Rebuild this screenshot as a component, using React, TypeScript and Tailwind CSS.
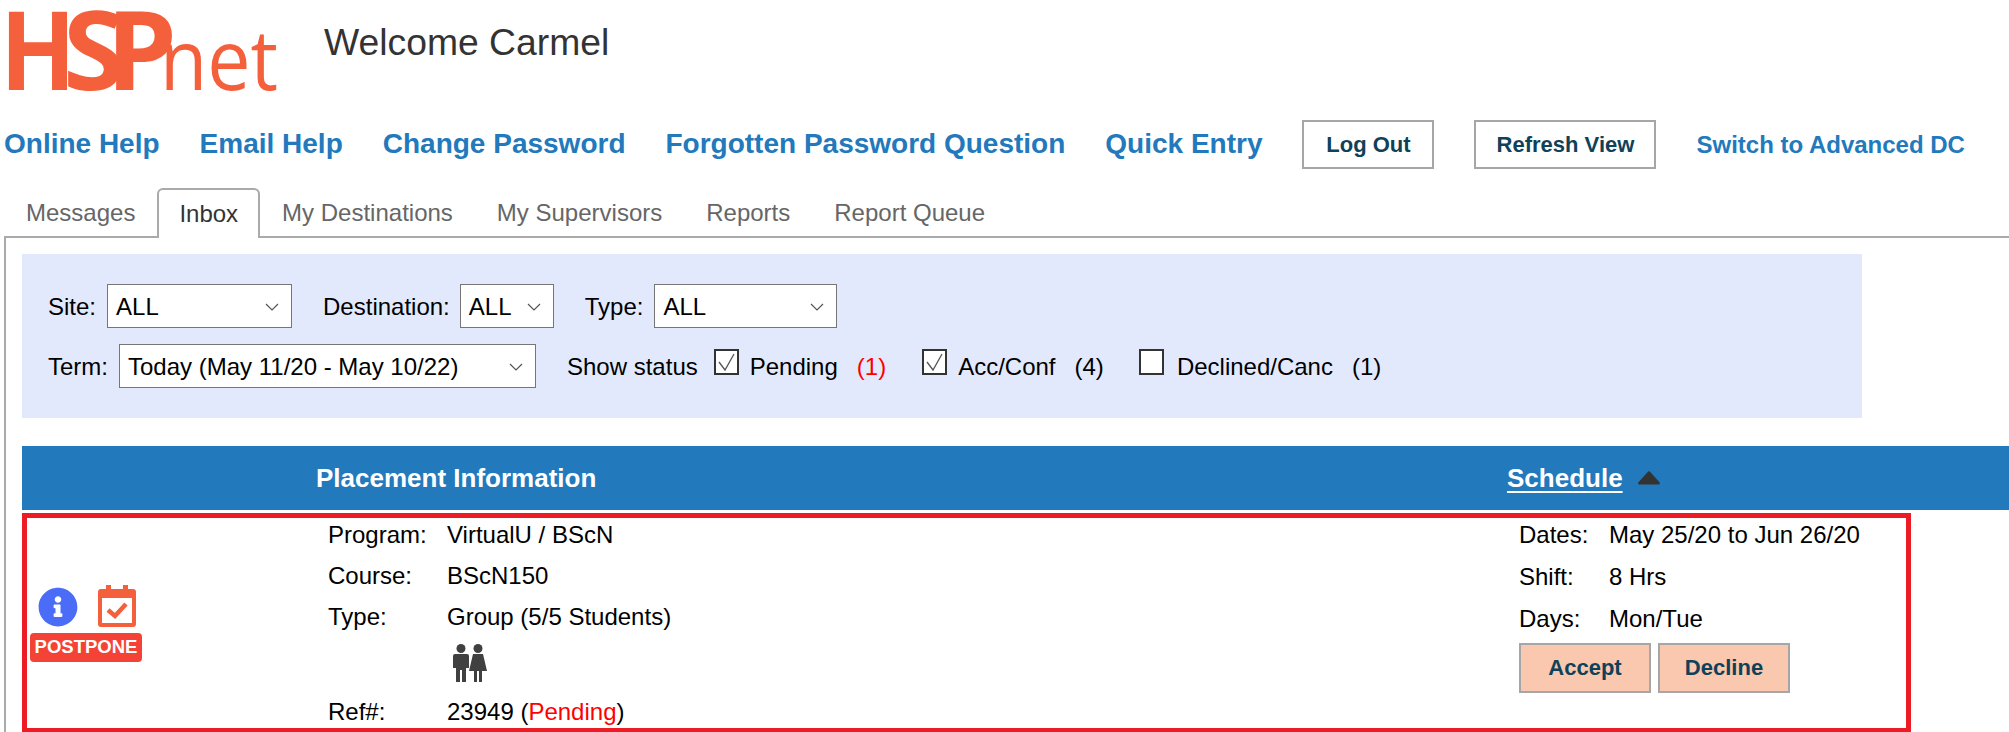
import { FaInfoCircle } from 'react-icons/fa';

function Logo() {
  return (
    <svg width="290" height="100" viewBox="0 0 290 100" className="shrink-0" fill="#f5603c" fontFamily="'Open Sans', sans-serif">
      <text x="0" y="90" fontSize="109" fontWeight="700" textLength="76" lengthAdjust="spacingAndGlyphs">H</text>
      <text x="63" y="90" fontSize="109" fontWeight="700" textLength="62" lengthAdjust="spacingAndGlyphs">S</text>
      <text x="106" y="90" fontSize="109" fontWeight="700" textLength="71" lengthAdjust="spacingAndGlyphs">P</text>
      <text x="160" y="90" fontSize="84" textLength="118" lengthAdjust="spacingAndGlyphs">net</text>
    </svg>
  );
}

function FakeSelect({ value, className }: { value: string; className: string }) {
  return (
    <div className={`flex h-[44px] items-center justify-between border border-[#767676] bg-white pl-[8px] pr-[12px] text-[24px] text-black ${className}`}>
      <span>{value}</span>
      <svg width="14" height="8" viewBox="0 0 14 8" fill="none" stroke="#555" strokeWidth="1.2">
        <path d="M1 1l6 6 6-6" />
      </svg>
    </div>
  );
}

function Check({ checked }: { checked?: boolean }) {
  return (
    <div className="flex h-[26px] w-[25px] -translate-y-[4px] items-center justify-center border-2 border-[#333] bg-white">
      {checked && (
        <svg width="19" height="19" viewBox="0 0 19 19" fill="none" stroke="#555" strokeWidth="1.3">
          <path d="M2 9l6 8 9-16" />
        </svg>
      )}
    </div>
  );
}

function InfoRow({ label, value, labelWidth }: { label: string; value: React.ReactNode; labelWidth: string }) {
  return (
    <div className="flex h-[34px] items-center">
      <span className={labelWidth}>{label}</span>
      <span>{value}</span>
    </div>
  );
}

export default function App() {
  return (
    <div className="h-[732px] w-[2009px] overflow-hidden bg-white font-['Liberation_Sans',Arial,sans-serif] text-[24px] leading-none text-black">
      {/* header */}
      <div className="flex h-[100px] items-start">
        <Logo />
        <h1 className="ml-[34px] mt-[22px] text-[37.300px] leading-[40px] text-[#333]">Welcome Carmel</h1>
      </div>

      {/* links */}
      <div className="mt-[20px] flex h-[49px] items-center pl-[4px] font-bold text-[#2279bc]">
        <div className="flex gap-[40px] pb-[2px] text-[28px]">
          <a>Online Help</a>
          <a>Email Help</a>
          <a>Change Password</a>
          <a>Forgotten Password Question</a>
          <a>Quick Entry</a>
        </div>
        <button className="ml-[40px] h-[49px] w-[132px] border-2 border-[#a6a6a6] text-[22px] text-[#0f4159]">Log Out</button>
        <button className="ml-[40px] h-[49px] w-[182px] border-2 border-[#a6a6a6] text-[22px] text-[#0f4159]">Refresh View</button>
        <a className="ml-[40px] text-[24px]">Switch to Advanced DC</a>
      </div>

      {/* tabs */}
      <div className="mt-[19px] flex h-[48px] pl-[4px] text-[#666]">
        <div className="flex items-center px-[22px] pt-[2px]">Messages</div>
        <div className="relative z-10 flex h-[50px] items-center rounded-t-[6px] border-2 border-b-0 border-[#aaa] bg-white px-[20px] text-[#333]">Inbox</div>
        <div className="flex items-center pl-[22px] pr-[22px] pt-[2px]">My Destinations</div>
        <div className="flex items-center pl-[22px] pr-[22px] pt-[2px]">My Supervisors</div>
        <div className="flex items-center pl-[22px] pr-[22px] pt-[2px]">Reports</div>
        <div className="flex items-center px-[22px] pt-[2px]">Report Queue</div>
      </div>

      {/* content */}
      <div className="ml-[4px] h-[500px] border-l-2 border-t-2 border-[#aaa] pl-[16px] pt-[16px]">
        {/* filters */}
        <div className="flex h-[164px] w-[1840px] flex-col gap-[16px] bg-[#e3e9fd] pl-[26px] pt-[30px]">
          <div className="flex items-center">
            <span className="pt-[1px]">Site:</span>
            <FakeSelect value="ALL" className="ml-[11px] w-[185px] pt-[1px]" />
            <span className="ml-[31px] pt-[1px]">Destination:</span>
            <FakeSelect value="ALL" className="ml-[10px] w-[94px] pt-[1px]" />
            <span className="ml-[31px] pt-[1px]">Type:</span>
            <FakeSelect value="ALL" className="ml-[11px] w-[183px] pt-[1px]" />
          </div>
          <div className="flex items-center">
            <span className="pt-[1px]">Term:</span>
            <FakeSelect value="Today (May 11/20 - May 10/22)" className="ml-[11px] w-[417px] pt-[1px]" />
            <span className="ml-[31px] pt-[1px]">Show status</span>
            <div className="ml-[16px]"><Check checked /></div>
            <span className="ml-[11px] pt-[1px]">Pending</span>
            <span className="ml-[19px] pt-[1px] text-[#f00]">(1)</span>
            <div className="ml-[36px]"><Check checked /></div>
            <span className="ml-[11px] pt-[1px]">Acc/Conf</span>
            <span className="ml-[19px] pt-[1px]">(4)</span>
            <div className="ml-[35px]"><Check /></div>
            <span className="ml-[13px] pt-[1px]">Declined/Canc</span>
            <span className="ml-[19px] pt-[1px]">(1)</span>
          </div>
        </div>

        {/* table head */}
        <div className="mt-[28px] flex h-[64px] items-center bg-[#2279bc] font-bold text-white">
          <span className="ml-[294px] w-[1191px] text-[26px]">Placement Information</span>
          <span className="text-[26px] underline underline-offset-[4px]">Schedule</span>
          <svg width="24" height="14" viewBox="0 0 24 14" className="ml-[14px]" fill="#333">
            <path d="M10.5 1.2a2 2 0 0 1 3 0l9 10c.8 1 .2 2.3-1 2.3H2.5c-1.200 0-1.800-1.300-1-2.300z" />
          </svg>
        </div>

        {/* placement row */}
        <div className="mt-[3px] flex h-[220px] w-[1889px] border-[5px] border-[#ed1c24]">
          <div className="flex w-[301px] flex-col pl-[3px]">
            <div className="mt-[67px] flex items-start gap-[20px] pl-[8px]">
              <FaInfoCircle className="mt-[2px] text-[40px] text-[#4a6cf7]" />
              <svg width="38" height="43" viewBox="0 0 38 43">
                <rect x="8" y="0" width="5" height="8" fill="#f5603c" />
                <rect x="25" y="0" width="5" height="8" fill="#f5603c" />
                <rect x="0" y="4" width="38" height="38" rx="3" fill="#f5603c" />
                <rect x="4" y="13" width="30" height="25" fill="#fff" />
                <path d="M10 25l7 6 11-12" fill="none" stroke="#f5603c" strokeWidth="4.500" />
              </svg>
            </div>
            <div className="mt-[5px] flex h-[29px] w-[112px] items-center justify-center rounded-[4px] bg-[#f44336] text-[18.500px] font-bold text-white">POSTPONE</div>
          </div>

          <div className="flex w-[1191px] flex-col gap-[8px]">
            <InfoRow labelWidth="w-[119px]" label="Program:" value="VirtualU / BScN" />
            <InfoRow labelWidth="w-[119px]" label="Course:" value="BScN150" />
            <InfoRow labelWidth="w-[119px]" label="Type:" value="Group (5/5 Students)" />
            <div className="ml-[125px] mt-[3px] h-[38px]">
              <svg width="34" height="38" viewBox="0 0 34 38" fill="#404040">
                <circle cx="8" cy="4.500" r="4.500" />
                <circle cx="25" cy="4.500" r="4.500" />
                <path d="M2 10h12a2 2 0 0 1 2 2v12h-3v14H9v-12H7v12H3V24H0V12a2 2 0 0 1 2-2z" />
                <path d="M20 10h10l4 17h-5v11h-3V27h-2v11h-3V27h-5z" />
              </svg>
            </div>
            <div className="mt-[5px] flex h-[34px] items-center">
              <span className="w-[119px]">Ref#:</span>
              <span>23949 (<span className="text-[#f00]">Pending</span>)</span>
            </div>
          </div>

          <div className="flex flex-col gap-[8px]">
            <InfoRow labelWidth="w-[90px]" label="Dates:" value="May 25/20 to Jun 26/20" />
            <InfoRow labelWidth="w-[90px]" label="Shift:" value="8 Hrs" />
            <InfoRow labelWidth="w-[90px]" label="Days:" value="Mon/Tue" />
            <div className="-mt-[1px] flex gap-[7px]">
              <button className="h-[50px] w-[132px] border-2 border-[#a6a6a6] bg-[#f9c8ae] text-[22px] font-bold text-[#0f4159]">Accept</button>
              <button className="h-[50px] w-[132px] border-2 border-[#a6a6a6] bg-[#f9c8ae] text-[22px] font-bold text-[#0f4159]">Decline</button>
            </div>
          </div>
        </div>
      </div>
    </div>
  );
}
